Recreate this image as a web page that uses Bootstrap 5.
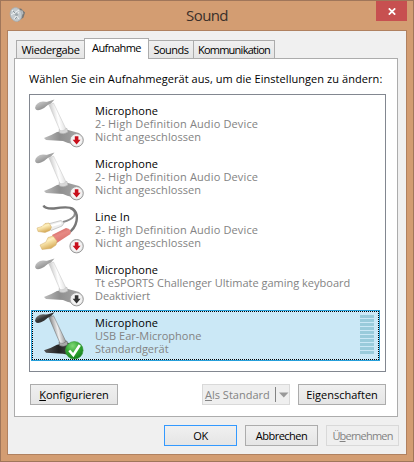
<!DOCTYPE html>
<html lang="de">
<head>
<meta charset="utf-8">
<meta name="viewport" content="width=device-width, initial-scale=1">
<title>Sound</title>
<link rel="stylesheet" href="https://cdn.jsdelivr.net/npm/bootstrap@5.3.0/dist/css/bootstrap.min.css">
<style>
body{width:414px;height:462px;overflow:hidden;font:11px/13px "Open Sans","Noto Sans",sans-serif;color:#000}
.window{width:414px;height:462px;background:#d39d72;border:1px solid #a0765a;padding:0 6px 6px}
.titlebar{height:29px}
.caption{font-size:15px;line-height:29px;color:#3a2f2a;letter-spacing:-.6px}
.app-icon{left:2px;top:5px}
.close-btn{right:0;top:0;width:31px;height:20px;background:#c75050}
.client{height:425px;background:#f0f0f0;border:1px solid #b08160;padding:7px 7px 0 6px}
.tabs{height:20px;padding-left:2px}
.tabs .tab{height:18px;border:1px solid #acacac;border-bottom:0;background:linear-gradient(#f0f0f0,#e5e5e5);line-height:18px;text-align:center;white-space:nowrap;margin-left:-1px;letter-spacing:-.35px}
.tabs .tab:first-child{margin-left:0}
.tabs .current{height:21px;background:#fff;z-index:2;line-height:17px;align-self:flex-start!important}
.t1{width:69px}.tabs .t2{width:65px;letter-spacing:-.55px}.tabs .t3{width:46px;letter-spacing:-.5px}.tabs .t4{width:82px;letter-spacing:-.75px}
.page{height:359px;background:#fff;border:1px solid #acacac;padding:12px 11px 0 14px;width:384px}
.intro{height:23px;line-height:16px;white-space:nowrap;letter-spacing:.06px}
.devices{height:278px;width:357px;border:1px solid #828790;padding:3px 5px 0 1px}
.device{height:51px;margin-bottom:2px;padding:0 5px 0 2px;border:1px solid transparent}
.device .txt{margin-left:11px;padding-top:5px;white-space:nowrap;color:#838383}
.device .txt div:first-child{color:#000;letter-spacing:.1px}
.device svg{width:50px;height:49px;flex:none}
.device.selected{background:#cbe8f6;border-color:#26a0da;position:relative}
.focus{inset:0;border:1px dotted #000}
.meter{width:14px;padding-top:4px}
.meter i{display:block;height:3px;margin-bottom:1px;background:#99cbdb}
.wbtn{height:21px;border:1px solid #acacac;background:linear-gradient(#f0f0f0,#e5e5e5);text-align:center;line-height:19px;white-space:nowrap}
.wbtn.off{border-color:#d9d9d9;background:#efefef;color:#838383}
.wbtn.primary{border-color:#3399ff}
.w88{width:88px}.w73{width:73px}
.actions{margin-top:12px;padding-left:1px}
.footer-row{margin-top:8px;gap:8px}
.split-label{width:67px;padding-left:2px}
.split{width:1px;height:15px;background:#838383;margin:0 3px 0 5px}
.s2{letter-spacing:.14px}.s1{letter-spacing:.06px}.n1{letter-spacing:-.05px}.n3{letter-spacing:-.3px}.n5{letter-spacing:-.5px}.n8{letter-spacing:-.8px}
</style>
<script src="https://cdn.jsdelivr.net/npm/bootstrap@5.3.0/dist/js/bootstrap.bundle.min.js"></script>
</head>
<body>
<svg width="0" height="0" class="position-absolute">
<defs>
<linearGradient id="stem" x1="0" x2="1" y1=".4" y2=".1"><stop offset="0" stop-color="#bbb"/><stop offset=".45" stop-color="#fff"/><stop offset="1" stop-color="#ccc"/></linearGradient>
<linearGradient id="stemDark" x1="0" x2="1" y1=".4" y2=".1"><stop offset="0" stop-color="#666"/><stop offset=".45" stop-color="#eee"/><stop offset="1" stop-color="#555"/></linearGradient>
<linearGradient id="base"><stop offset="0" stop-color="#bcbcbc"/><stop offset=".4" stop-color="#8f8f8f"/><stop offset="1" stop-color="#aaa"/></linearGradient>
<linearGradient id="baseDark"><stop offset="0" stop-color="#555"/><stop offset=".4" stop-color="#222"/><stop offset="1" stop-color="#666"/></linearGradient>
<linearGradient id="head" x1="0" x2=".7" y1="0" y2="1"><stop offset="0" stop-color="#d5d5d5"/><stop offset="1" stop-color="#868686"/></linearGradient>
<linearGradient id="headDark" x1="0" x2=".7" y1="0" y2="1"><stop offset="0" stop-color="#999"/><stop offset=".6" stop-color="#333"/><stop offset="1" stop-color="#333"/></linearGradient>
<linearGradient id="gold" x1="0" y1="0" x2=".5" y2="1"><stop offset="0" stop-color="#dbb35c"/><stop offset=".45" stop-color="#fff0bd"/><stop offset="1" stop-color="#d5a955"/></linearGradient>
<linearGradient id="red" x1="0" y1="0" x2=".5" y2="1"><stop offset="0" stop-color="#c94f4f"/><stop offset=".5" stop-color="#e78a84"/><stop offset="1" stop-color="#d86f6b"/></linearGradient>
<radialGradient id="green" cx=".4" cy=".25" r=".8"><stop offset="0" stop-color="#82d878"/><stop offset=".5" stop-color="#32a832"/><stop offset="1" stop-color="#147a1c"/></radialGradient>
<radialGradient id="disc"><stop offset="0" stop-color="#fff"/><stop offset=".7" stop-color="#f4f4f4"/><stop offset="1" stop-color="#ddd"/></radialGradient>
<g id="mic">
<path d="M10 39 Q18 36 23 33 L34 31 L45 34 L49 40 L38 45 Q33 44 29 42 L12 41z" fill="url(#base)"/>
<path d="M25 30.500 Q29 28 33 29.500 L34 33 Q30 36 25.500 34z" fill="#d8d8d8" stroke="#aaa" stroke-width=".5"/>
<path d="M15 6 L19.500 4 L32 30 Q29 32.500 26 31.500z" fill="url(#stem)" stroke="#c2c2c2" stroke-width=".5"/>
<path d="M11 3.500 L20.500 .5 L17 4.500 L12 7z" fill="#a2a2a2"/>
<path d="M1 9 Q2 3 9 2.500 L14 3 Q14 8 7 10.500 Q2 12.500 1 9z" fill="url(#head)"/>
</g>
<g id="micDark" transform="translate(0 .7)">
<path d="M10 38.500 Q18 36 23 33 L34 31 L44 34 L47 40 L38 44 L29 42 L12 41z" fill="url(#baseDark)"/>
<path d="M25 30.500 Q29 28 33 29.500 L34 33 Q30 36 25.500 34z" fill="#aaa" stroke="#444" stroke-width=".5"/>
<path d="M15 6 L19.500 4 L32 30 Q29 32.500 26 31.500z" fill="url(#stemDark)" stroke="#666" stroke-width=".5"/>
<path d="M11 3.500 L20.500 .5 L17 4.500 L12 7z" fill="#333"/>
<path d="M1 9 Q2 3 9 2.500 L14 3 Q14 8 7 10.500 Q2 12.500 1 9z" fill="url(#headDark)"/>
</g>
<g id="badge"><circle cx="42.600" cy="41.200" r="6.700" fill="url(#disc)" stroke="#9a9a9a"/></g>
<path id="arrow" d="M40.800 37.200h3.600v3.500h2.200L42.600 45.500 38.600 40.700h2.200z"/>
</defs>
</svg>
<div class="window">
<div class="titlebar position-relative text-center">
<svg class="app-icon position-absolute" width="17" height="17" viewBox="0 0 17 17"><path d="M8 3l4-.500 4 4-1.500 5-5.500 4z" fill="#777"/><path d="M11 4.500h2.500l1 3-3 3z" fill="#b5bbbd"/><ellipse cx="7" cy="8.500" rx="5.800" ry="7" transform="rotate(-15 7 8.500)" fill="#c3cace" stroke="#a5adb1" stroke-width=".7"/><path d="M3 4l7 9M2 9l8-5M5 13l5-7" stroke="#eef2f3" stroke-width="1"/><circle cx="7.500" cy="8.500" r="1.600" fill="#9ea8ad"/><path d="M4 5l2 2M8 11l-2 2" stroke="#8b979e"/></svg>
<span class="caption">Sound</span>
<div class="close-btn position-absolute d-flex align-items-center justify-content-center"><svg width="8" height="7" viewBox="0 0 8 7"><path d="M.8.300l6.400 6.400M7.200.300L.8 6.700" stroke="#fff" stroke-width="1.700"/></svg></div>
</div>
<div class="client">
<div class="tabs d-flex align-items-end">
<div class="tab t1">Wiedergabe</div><div class="tab t2 current position-relative">Aufnahme</div><div class="tab t3">Sounds</div><div class="tab t4">Kommunikation</div>
</div>
<div class="page">
<div class="intro">Wählen Sie ein Aufnahmegerät aus, um die Einstellungen zu ändern:</div>
<div class="devices">
<div class="device d-flex"><svg viewBox="0 0 50 49"><use href="#mic"/><use href="#badge"/><use href="#arrow" fill="#c8101c"/></svg><div class="txt"><div>Microphone</div><div class="s2">2- High Definition Audio Device</div><div class="s1">Nicht angeschlossen</div></div></div>
<div class="device d-flex"><svg viewBox="0 0 50 49"><use href="#mic"/><use href="#badge"/><use href="#arrow" fill="#c8101c"/></svg><div class="txt"><div>Microphone</div><div class="s2">2- High Definition Audio Device</div><div class="s1">Nicht angeschlossen</div></div></div>
<div class="device d-flex"><svg viewBox="0 0 50 49">
<path d="M36 3 Q43 6 40 11 Q37 15 29 17" fill="none" stroke="#8d8d8d" stroke-width="2"/>
<path d="M9.500 .5 Q11 4 20 3.500 Q35 1 39 4 Q44 8 42.500 16 Q41 24 34 28" fill="none" stroke="#777" stroke-width="2.400"/>
<path d="M14 19 L27 15.500 L30 18 L28 21 L17 25.500z" fill="#eee" stroke="#b5b5b5" stroke-width=".7"/><path d="M17 21l10-3" stroke="#fff" stroke-width="2"/>
<path d="M3 23 L8 21.500 L11 18.500 L15 18 L17.500 22 L16 25.500 L11 27.500 L4 26.500z" fill="url(#gold)" stroke="#d0ad68" stroke-width=".5"/>
<path d="M18 30 L32 23 Q38 24 36.500 29 L22 38.500z" fill="url(#red)"/>
<path d="M6 40 L12 37 L14 32.500 L19 31 L23 36 L22 40 L17 43.500 L8 44.500z" fill="url(#gold)" stroke="#d0ad68" stroke-width=".5"/>
<use href="#badge"/><use href="#arrow" fill="#c8101c"/></svg><div class="txt"><div>Line In</div><div class="s2">2- High Definition Audio Device</div><div class="s1">Nicht angeschlossen</div></div></div>
<div class="device d-flex"><svg viewBox="0 0 50 49"><use href="#mic"/><use href="#badge"/><use href="#arrow" fill="#333"/></svg><div class="txt"><div>Microphone</div><div>Tt eSPORTS Challenger Ultimate gaming keyboard</div><div class="n1">Deaktiviert</div></div></div>
<div class="device selected d-flex"><svg viewBox="0 0 50 49"><use href="#micDark"/><circle cx="40.300" cy="39.300" r="8.800" fill="url(#green)" stroke="#3c9b3c" stroke-width=".6"/><path d="M35.300 39.500l4 4.500 6.500-10" fill="none" stroke="#fff" stroke-width="2.600"/></svg><div class="txt"><div>Microphone</div><div>USB Ear-Microphone</div><div>Standardgerät</div></div>
<div class="meter ms-auto"><i></i><i></i><i></i><i></i><i></i><i></i><i></i><i></i><i></i><i></i></div><div class="focus position-absolute"></div></div>
</div>
<div class="actions d-flex">
<div class="wbtn w88 n1"><u>K</u>onfigurieren</div>
<div class="wbtn off w88 ms-auto me-2 d-flex align-items-center"><span class="split-label text-start flex-shrink-0"><u>A</u>ls Standard</span><span class="split flex-shrink-0"></span><svg class="flex-shrink-0" width="10" height="6"><path d="M0 .500h9.500L4.800 5.500z" fill="#999"/></svg></div>
<div class="wbtn w88">Eigenschaften</div>
</div>
</div>
<div class="footer-row d-flex justify-content-end">
<div class="wbtn primary w73 n3">OK</div><div class="wbtn w73 n5">Abbrechen</div><div class="wbtn off w73 n8">Ü<u>b</u>ernehmen</div>
</div>
</div>
</div>
</body>
</html>
